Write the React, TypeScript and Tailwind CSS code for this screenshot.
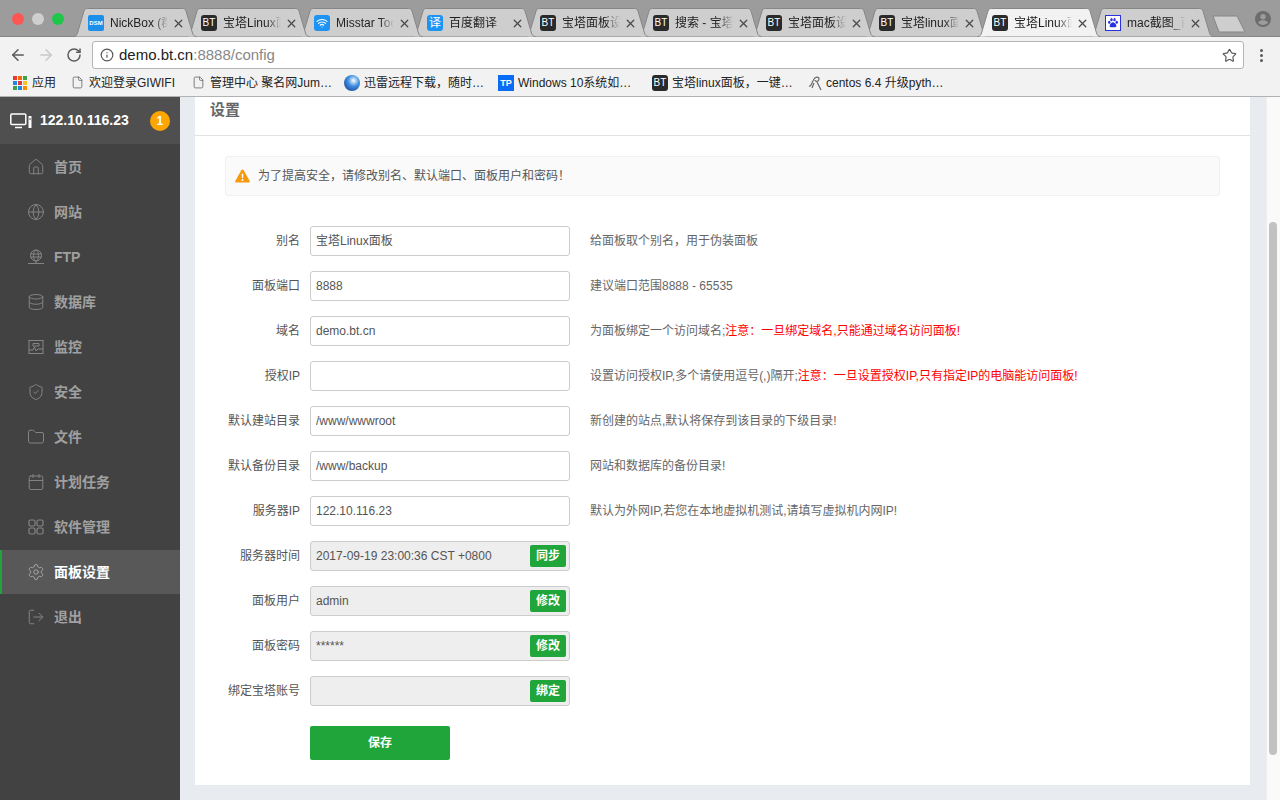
import {
  ArrowLeft,
  ArrowRight,
  Calendar,
  Database,
  File,
  Folder,
  Globe,
  House,
  Info,
  LogOut,
  RotateCw,
  Settings,
  ShieldCheck,
  Star,
  Wifi,
  X,
} from 'lucide-react';

const tabs = [
  { title: 'NickBox (群晖)', icon: 'dsm' },
  { title: '宝塔Linux面板', icon: 'bt' },
  { title: 'Misstar Tools', icon: 'wifi' },
  { title: '百度翻译', icon: 'yi' },
  { title: '宝塔面板设置', icon: 'bt' },
  { title: '搜索 - 宝塔论坛', icon: 'bt' },
  { title: '宝塔面板设置', icon: 'bt' },
  { title: '宝塔linux面板', icon: 'bt' },
  { title: '宝塔Linux面板', icon: 'bt', active: true },
  { title: 'mac截图_百度', icon: 'paw' },
];

function BtIcon() {
  return (
    <span className="w-4 h-4 rounded-[3px] bg-[#2a2a2a] text-white text-[10px] leading-4 text-center shrink-0">BT</span>
  );
}

function TabIcon({ icon }: { icon: string }) {
  if (icon === 'bt') return <BtIcon />;
  if (icon === 'dsm')
    return (
      <span className="w-4 h-4 rounded-[2px] bg-[#1b8fea] text-white text-[6px] font-bold leading-4 text-center shrink-0">
        DSM
      </span>
    );
  if (icon === 'wifi')
    return (
      <span className="w-4 h-4 rounded-[3px] bg-[#1d93f3] flex items-center justify-center shrink-0">
        <Wifi className="size-3 text-white" strokeWidth={2.4} />
      </span>
    );
  if (icon === 'yi')
    return (
      <span className="w-4 h-4 rounded-[3px] bg-[#1d93f3] text-white text-[12px] leading-4 text-center shrink-0">译</span>
    );
  return (
    <span className="w-4 h-4 bg-white border border-[#2932e1] flex items-center justify-center shrink-0">
      <svg viewBox="0 0 16 16" className="size-3" fill="#2932e1">
        <ellipse cx="3" cy="7" rx="1.6" ry="2.1" />
        <ellipse cx="6" cy="3.5" rx="1.6" ry="2.2" />
        <ellipse cx="10" cy="3.5" rx="1.6" ry="2.2" />
        <ellipse cx="13" cy="7" rx="1.6" ry="2.1" />
        <path d="M8 7c-2 0-4.5 3-4.5 5 0 2 2.5 2 4.5 1.5 2 .5 4.5.5 4.5-1.5 0-2-2.5-5-4.5-5z" />
      </svg>
    </span>
  );
}

function Tab({ title, icon, active, index }: { title: string; icon: string; active?: boolean; index: number }) {
  return (
    <div
      className="relative w-[124px] h-[29px] -mr-[11px] shrink-0 flex items-center pl-[15px] pt-[1px]"
      style={{ zIndex: active ? 30 : 20 - index }}
    >
      <svg viewBox="0 0 124 29" className="absolute inset-0 w-[124px] h-[29px]">
        <path
          d="M0.5 28.5 C3 28.5 3.8 27 4.5 25 L11 3 C11.6 1.2 12.6 0.5 14.5 0.5 L109.5 0.5 C111.4 0.5 112.4 1.2 113 3 L119.5 25 C120.2 27 121 28.5 123.5 28.5"
          fill={active ? '#f2f2f2' : '#cecece'}
          stroke="#868686"
        />
      </svg>
      <span className="relative flex items-center">
        <TabIcon icon={icon} />
        <span className="ml-[6px] w-[58px] overflow-hidden whitespace-nowrap text-[12px] text-[#222] [mask-image:linear-gradient(to_right,black_75%,transparent)]">
          {title}
        </span>
        <X className="ml-[4px] size-[13px] text-[#4a4a4a]" strokeWidth={2.4} />
      </span>
    </div>
  );
}

function TitleBar() {
  return (
    <div className="h-[37px] bg-[#9c9c9c] border-b border-[#868686] flex items-end relative">
      <div className="w-[73px] h-full flex items-start gap-2 pl-3 pt-[13px] shrink-0">
        <span className="w-3 h-3 rounded-full bg-[#fc5753]" />
        <span className="w-3 h-3 rounded-full bg-[#cfcfcf]" />
        <span className="w-3 h-3 rounded-full bg-[#1ec64a]" />
      </div>
      <div className="flex -mb-px">
        {tabs.map((t, i) => (
          <Tab key={i} index={i} title={t.title} icon={t.icon} active={t.active} />
        ))}
      </div>
      <svg viewBox="0 0 34 18" className="w-[34px] h-[18px] ml-[9px] mb-[3px] shrink-0">
        <path d="M1 1 L25 1 L33 17 L7 17 Z" fill="#cecece" stroke="#868686" strokeLinejoin="round" />
      </svg>
      {/* profile */}
      <svg viewBox="0 0 16 16" className="size-4 ml-[9px] mb-[9px] shrink-0">
        <circle cx="8" cy="8" r="8" fill="#6d6d6d" />
        <circle cx="8" cy="5.7" r="2.7" fill="#9c9c9c" />
        <path d="M3 11.4 C4 9.9 6.3 9.3 8 9.3 C9.7 9.3 12 9.9 13 11.4 A6 6 0 0 1 3 11.4 Z" fill="#9c9c9c" />
      </svg>
    </div>
  );
}

function Toolbar() {
  return (
    <div className="h-[32px] bg-[#f2f2f2] pt-[4px] flex items-center">
      <ArrowLeft className="ml-[9px] size-[18px] text-[#5a5a5a]" strokeWidth={2} />
      <ArrowRight className="ml-[10px] size-[18px] text-[#c9c9c9]" strokeWidth={2} />
      <RotateCw className="ml-[11px] size-[16px] text-[#5a5a5a]" strokeWidth={2.2} />
      <div className="ml-[10px] w-[1152px] h-[28px] bg-white border border-[#b5b5b5] rounded-[3px] flex items-center pl-[7px] pr-[6px]">
        <Info className="size-[14px] text-[#555]" strokeWidth={2} />
        <span className="ml-[5px] text-[15px] text-[#222]">
          demo.bt.cn<span className="text-[#888]">:8888/config</span>
        </span>
        <Star className="ml-auto size-[15px] text-[#555]" strokeWidth={1.8} />
      </div>
      <div className="ml-[16px] flex flex-col gap-[2px]">
        <span className="w-[3px] h-[3px] rounded-full bg-[#5a5a5a]" />
        <span className="w-[3px] h-[3px] rounded-full bg-[#5a5a5a]" />
        <span className="w-[3px] h-[3px] rounded-full bg-[#5a5a5a]" />
      </div>
    </div>
  );
}

const appDots = ['#e53935', '#ef6c00', '#43a047', '#1e88e5', '#e53935', '#fbc02d', '#43a047', '#1e88e5', '#fb8c00'];

function Bookmarks() {
  return (
    <div className="h-[28px] bg-[#f2f2f2] border-b border-[#b2b2b2] flex items-center text-[12px] text-[#222] whitespace-nowrap">
      <span className="ml-[13px] grid grid-cols-3 gap-[1px] w-[14px] shrink-0">
        {appDots.map((c, i) => (
          <span key={i} className="w-[4px] h-[4px]" style={{ backgroundColor: c }} />
        ))}
      </span>
      <span className="ml-[5px] w-[24px]">应用</span>
      <File className="ml-[15px] size-[13px] text-[#666]" strokeWidth={1.5} />
      <span className="ml-[5px] w-[88px]">欢迎登录GIWIFI</span>
      <File className="ml-[15px] size-[13px] text-[#666]" strokeWidth={1.5} />
      <span className="ml-[5px] w-[125px]">管理中心 聚名网Jum…</span>
      <span className="ml-[9px] w-4 h-4 rounded-full bg-[radial-gradient(circle_at_60%_35%,#ffffff,#3f8fe0_40%,#12307f)] shrink-0" />
      <span className="ml-[4px] w-[124px]">迅雷远程下载，随时…</span>
      <span className="ml-[10px] w-4 h-4 bg-[#0a6cf5] text-white text-[9px] font-bold leading-4 text-center shrink-0">TP</span>
      <span className="ml-[4px] w-[122px]">Windows 10系统如…</span>
      <span className="ml-[12px] flex">
        <BtIcon />
      </span>
      <span className="ml-[4px] w-[126px]">宝塔linux面板，一键…</span>
      <svg viewBox="0 0 16 16" className="ml-[9px] size-4 shrink-0" fill="none" stroke="#666" strokeWidth="1.2">
        <path d="M2 11 C4 12 5 7 7 4 C8 2 12 1 12 4 C12 7 8 7 8 5 M10 7 L14 15 M7 8 L5 13" />
      </svg>
      <span className="ml-[3px]">centos 6.4 升级pyth…</span>
    </div>
  );
}

function MonitorIcon() {
  return (
    <svg viewBox="0 0 22 16" className="w-[22px] h-4 shrink-0" fill="none" stroke="white">
      <rect x="0.8" y="1" width="15" height="10.5" rx="1" strokeWidth="1.5" />
      <path d="M5 14.5 H12" strokeWidth="1.5" />
      <rect x="18.5" y="3" width="3" height="12" fill="white" stroke="none" rx="0.5" />
      <path d="M19 6h2" stroke="#4f4f4f" />
    </svg>
  );
}

function FtpIcon({ className }: { className?: string }) {
  return (
    <svg viewBox="-1 -1 18 18" className={className} fill="none" stroke="currentColor" strokeWidth="1">
      <circle cx="8" cy="6.5" r="5.5" />
      <ellipse cx="8" cy="6.5" rx="2.5" ry="5.5" />
      <path d="M2.5 5 H13.5 M2.5 8 H13.5 M0 14.5 H16 M8 12 V14.5" />
    </svg>
  );
}

function MonitorBoxIcon({ className }: { className?: string }) {
  return (
    <svg viewBox="-1 -1 18 18" className={className} fill="none" stroke="currentColor" strokeWidth="1">
      <rect x="1" y="1.5" width="14" height="13" />
      <path d="M1 11 H5 L6.5 8 L8 12 L10 10 H15 M5 4.5 H11 V7 H5 Z" />
    </svg>
  );
}

function GridIcon({ className }: { className?: string }) {
  return (
    <svg viewBox="-1 -1 18 18" className={className} fill="none" stroke="currentColor" strokeWidth="1.2">
      <rect x="1" y="1" width="6" height="6" rx="1.5" />
      <rect x="9" y="1" width="6" height="6" rx="1.5" />
      <rect x="1" y="9" width="6" height="6" rx="1.5" />
      <rect x="9" y="9" width="6" height="6" rx="1.5" />
    </svg>
  );
}

const menu = [
  { name: '首页', Icon: House },
  { name: '网站', Icon: Globe },
  { name: 'FTP', Icon: FtpIcon },
  { name: '数据库', Icon: Database },
  { name: '监控', Icon: MonitorBoxIcon },
  { name: '安全', Icon: ShieldCheck },
  { name: '文件', Icon: Folder },
  { name: '计划任务', Icon: Calendar },
  { name: '软件管理', Icon: GridIcon },
  { name: '面板设置', Icon: Settings, active: true },
  { name: '退出', Icon: LogOut },
];

function Sidebar() {
  return (
    <aside className="w-[180px] h-full bg-[#424242] shrink-0">
      <div className="h-[47px] bg-[#4f4f4f] flex items-center pl-[10px]">
        <MonitorIcon />
        <span className="ml-2 text-[14px] font-bold text-white">122.10.116.23</span>
        <span className="ml-[21px] w-5 h-5 rounded-full bg-[#ffa500] text-white text-[12px] font-bold leading-5 text-center">
          1
        </span>
      </div>
      <nav className="pt-px">
        {menu.map(({ name, Icon, active }) => (
          <div
            key={name}
            className={
              active
                ? 'h-[44px] mb-px flex items-center pl-[25px] border-l-2 border-[#20a53a] bg-[#585858] text-white font-bold'
                : 'h-[44px] mb-px flex items-center pl-[27px] text-[#a0a0a0] font-bold'
            }
          >
            <Icon className={active ? 'size-[18px] text-[#a8a8a8] shrink-0' : 'size-[18px] text-[#858585] shrink-0'} strokeWidth={1.3} />
            <span className="ml-[9px] text-[14px]">{name}</span>
          </div>
        ))}
      </nav>
    </aside>
  );
}

function Row({ label, children, help }: { label: string; children: React.ReactNode; help?: React.ReactNode }) {
  return (
    <div className="h-[30px] mb-[15px] flex items-center">
      <label className="w-[75px] mr-[10px] text-right text-[12px] text-[#555] whitespace-nowrap">{label}</label>
      {children}
      {help && <span className="ml-5 text-[12px] text-[#666] whitespace-nowrap">{help}</span>}
    </div>
  );
}

function TextField({ value, cjk }: { value: string; cjk?: boolean }) {
  return (
    <input
      readOnly
      value={value}
      className={
        cjk
          ? 'w-[260px] h-[30px] bg-white border border-[#ccc] rounded-[3px] px-[5px] pb-[4px] text-[12px] text-[#555] outline-none'
          : 'w-[260px] h-[30px] bg-white border border-[#ccc] rounded-[3px] px-[5px] text-[12px] text-[#555] outline-none'
      }
    />
  );
}

function LockedField({ value, action }: { value: string; action: string }) {
  return (
    <div className="w-[260px] h-[30px] bg-[#eee] border border-[#ccc] rounded-[3px] pl-[5px] pr-[3px] flex items-center justify-between text-[12px] text-[#555]">
      <span>{value}</span>
      <button className="w-[36px] h-[22px] bg-[#20a53a] rounded-[2px] text-white text-[12px] font-bold">{action}</button>
    </div>
  );
}

const Warn = ({ children }: { children: React.ReactNode }) => <span className="text-[#ff0000]">{children}</span>;

function Settings_() {
  return (
    <div className="w-[1055px] ml-[15px] h-[688px] bg-white">
      <div className="h-[39px] border-b border-[#e2e2e2] pl-[15px] pt-[2px] text-[15px] leading-[22px] text-[#666] font-bold">
        设置
      </div>
      <div className="pt-5 pl-[30px]">
        <div className="w-[995px] h-[40px] bg-[#fafafa] border border-[#f1f1f1] rounded-[3px] flex items-center pl-[9px] text-[12px] text-[#555]">
          <svg viewBox="0 0 16 15" className="w-[15px] h-[14px] shrink-0">
            <path d="M8 0.5 C8.6 0.5 9 0.8 9.3 1.3 L15.6 12.6 C16.1 13.6 15.5 14.5 14.5 14.5 L1.5 14.5 C0.5 14.5 -0.1 13.6 0.4 12.6 L6.7 1.3 C7 0.8 7.4 0.5 8 0.5 Z" fill="#f59a0c" />
            <path d="M7.1 5 H8.9 L8.6 10 H7.4 Z M7.1 11 H8.9 V12.8 H7.1 Z" fill="white" />
          </svg>
          <span className="ml-2">为了提高安全，请修改别名、默认端口、面板用户和密码！</span>
        </div>
        <div className="mt-[30px]">
          <Row label="别名" help="给面板取个别名，用于伪装面板">
            <TextField value="宝塔Linux面板" cjk />
          </Row>
          <Row label="面板端口" help="建议端口范围8888 - 65535">
            <TextField value="8888" />
          </Row>
          <Row
            label="域名"
            help={
              <>
                为面板绑定一个访问域名;<Warn>注意：一旦绑定域名,只能通过域名访问面板!</Warn>
              </>
            }
          >
            <TextField value="demo.bt.cn" />
          </Row>
          <Row
            label="授权IP"
            help={
              <>
                设置访问授权IP,多个请使用逗号(,)隔开;<Warn>注意：一旦设置授权IP,只有指定IP的电脑能访问面板!</Warn>
              </>
            }
          >
            <TextField value="" />
          </Row>
          <Row label="默认建站目录" help="新创建的站点,默认将保存到该目录的下级目录!">
            <TextField value="/www/wwwroot" />
          </Row>
          <Row label="默认备份目录" help="网站和数据库的备份目录!">
            <TextField value="/www/backup" />
          </Row>
          <Row label="服务器IP" help="默认为外网IP,若您在本地虚拟机测试,请填写虚拟机内网IP!">
            <TextField value="122.10.116.23" />
          </Row>
          <Row label="服务器时间">
            <LockedField value="2017-09-19 23:00:36 CST +0800" action="同步" />
          </Row>
          <Row label="面板用户">
            <LockedField value="admin" action="修改" />
          </Row>
          <Row label="面板密码">
            <LockedField value="******" action="修改" />
          </Row>
          <Row label="绑定宝塔账号">
            <LockedField value="" action="绑定" />
          </Row>
          <button className="ml-[85px] mt-[5px] w-[140px] h-[34px] bg-[#20a53a] rounded-[2px] text-white text-[12px] font-bold">
            保存
          </button>
        </div>
      </div>
    </div>
  );
}

export default function App() {
  return (
    <div className="w-[1280px] h-[800px] overflow-hidden flex flex-col font-['Liberation_Sans','Noto_Sans_CJK_SC',sans-serif]">
      <TitleBar />
      <Toolbar />
      <Bookmarks />
      <div className="flex-1 flex min-h-0">
        <Sidebar />
        <main className="flex-1 bg-[#e8ebf0] min-w-0">
          <Settings_ />
        </main>
        {/* scrollbar */}
        <div className="w-[14px] bg-[#fafafa] border-l border-[#eeeeee] pl-[2px] shrink-0">
          <div className="mt-[125px] w-2 h-[533px] rounded-full bg-[#c2c2c2]" />
        </div>
      </div>
    </div>
  );
}
